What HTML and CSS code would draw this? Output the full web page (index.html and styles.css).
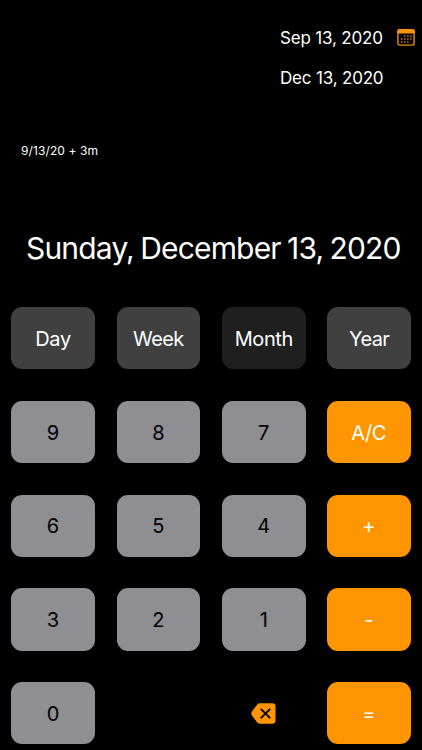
FILE: index.html
```
<!DOCTYPE html>
<html lang="en">
<head>
<meta charset="utf-8">
<title>Date Calculator</title>
<link rel="stylesheet" href="styles.css">
</head>
<body>
<main class="app">
  <header class="dates">
    <div class="date-row"><span class="date">Sep 13, 2020</span>
      <svg class="calendar" viewBox="0 0 18 17" width="18" height="17"><rect x=".9" y=".7" width="16.2" height="15.4" rx="1.8" fill="none" stroke="#e98b0c" stroke-width="1.4"/><path d="M.3 2.2Q.3.1 2.4.1H15.6Q17.7.1 17.7 2.2V4.5H.3z" fill="#f99409"/><path d="M7.2 7h1.3M10.2 7h1.3M13.2 7h1.3M4.2 10h1.3M7.2 10h1.3M10.2 10h1.3M13.2 10h1.3M4.2 13h1.3M7.2 13h1.3M10.2 13h1.3" stroke="#e0870c" stroke-width="1.4"/></svg>
    </div>
    <div class="date-row"><span class="date">Dec 13, 2020</span></div>
  </header>
  <p class="expression">9/13/20 + 3m</p>
  <h1 class="result">Sunday, December 13, 2020</h1>
  <section class="keys">
    <button class="key unit">Day</button><button class="key unit">Week</button><button class="key unit active">Month</button><button class="key unit">Year</button>
    <button class="key">9</button><button class="key">8</button><button class="key">7</button><button class="key op">A/C</button>
    <button class="key">6</button><button class="key">5</button><button class="key">4</button><button class="key op">+</button>
    <button class="key">3</button><button class="key">2</button><button class="key">1</button><button class="key op">-</button>
    <button class="key">0</button><span></span><button class="key delete" aria-label="Delete"><svg viewBox="0 0 25 21" width="25" height="21"><path d="M9 .3H21.3Q24.5.3 24.5 3.5V17.5Q24.5 20.7 21.3 20.7H9Q7.4 20.7 6.2 19.5L1 12.5Q-.3 10.5 1 8.5L6.2 1.5Q7.4.3 9 .3Z" fill="#ff9500"/><path d="M10.3 6.3l8.4 8.4m0-8.4l-8.4 8.4" stroke="#000" stroke-width="1.9" stroke-linecap="round"/></svg></button><button class="key op">=</button>
  </section>
</main>
</body>
</html>
```
FILE: styles.css
```
* { box-sizing: border-box; }
body { margin: 0; background: #000; color: #fff; font-family: Inter, sans-serif; overflow: hidden; }
.app { width: 422px; height: 750px; overflow: hidden; }
.dates { padding-top: 17px; }
.date-row { display: flex; height: 40px; align-items: center; padding-left: 280px; }
.date { width: 117px; padding-top: 1px; font-size: 17px; letter-spacing: -.18px; white-space: nowrap; }
.expression { margin: 44px 0 0 21px; height: 20px; font-size: 12px; line-height: 20px; letter-spacing: .1px; }
.result { margin: 66px 0 0 26px; height: 42px; font-size: 30px; line-height: 42px; font-weight: 370; white-space: nowrap; letter-spacing: -.82px; word-spacing: -1.4px; }
.keys { display: grid; grid-template-columns: repeat(4, 83.7px); grid-auto-rows: 62.3px; column-gap: 21.7px; row-gap: 31.4px; padding: 38.2px 0 0 11.2px; }
.key { display: flex; align-items: center; justify-content: center; border: 0; border-radius: 11px; padding: 1.2px 0 0; background: #8e8e93; color: #000; font: 370 20px Inter, sans-serif; }
.unit { padding-top: 2px; background: #404040; color: #fff; font-weight: 390; letter-spacing: -.6px; }
.unit:first-child { letter-spacing: -.3px; }
.active { background: #1f1f1f; letter-spacing: -.4px; }
.op { background: #ff9500; color: #fff; letter-spacing: -.4px; padding-right: 1px; }
.delete { background: none; padding: 0; }
```
